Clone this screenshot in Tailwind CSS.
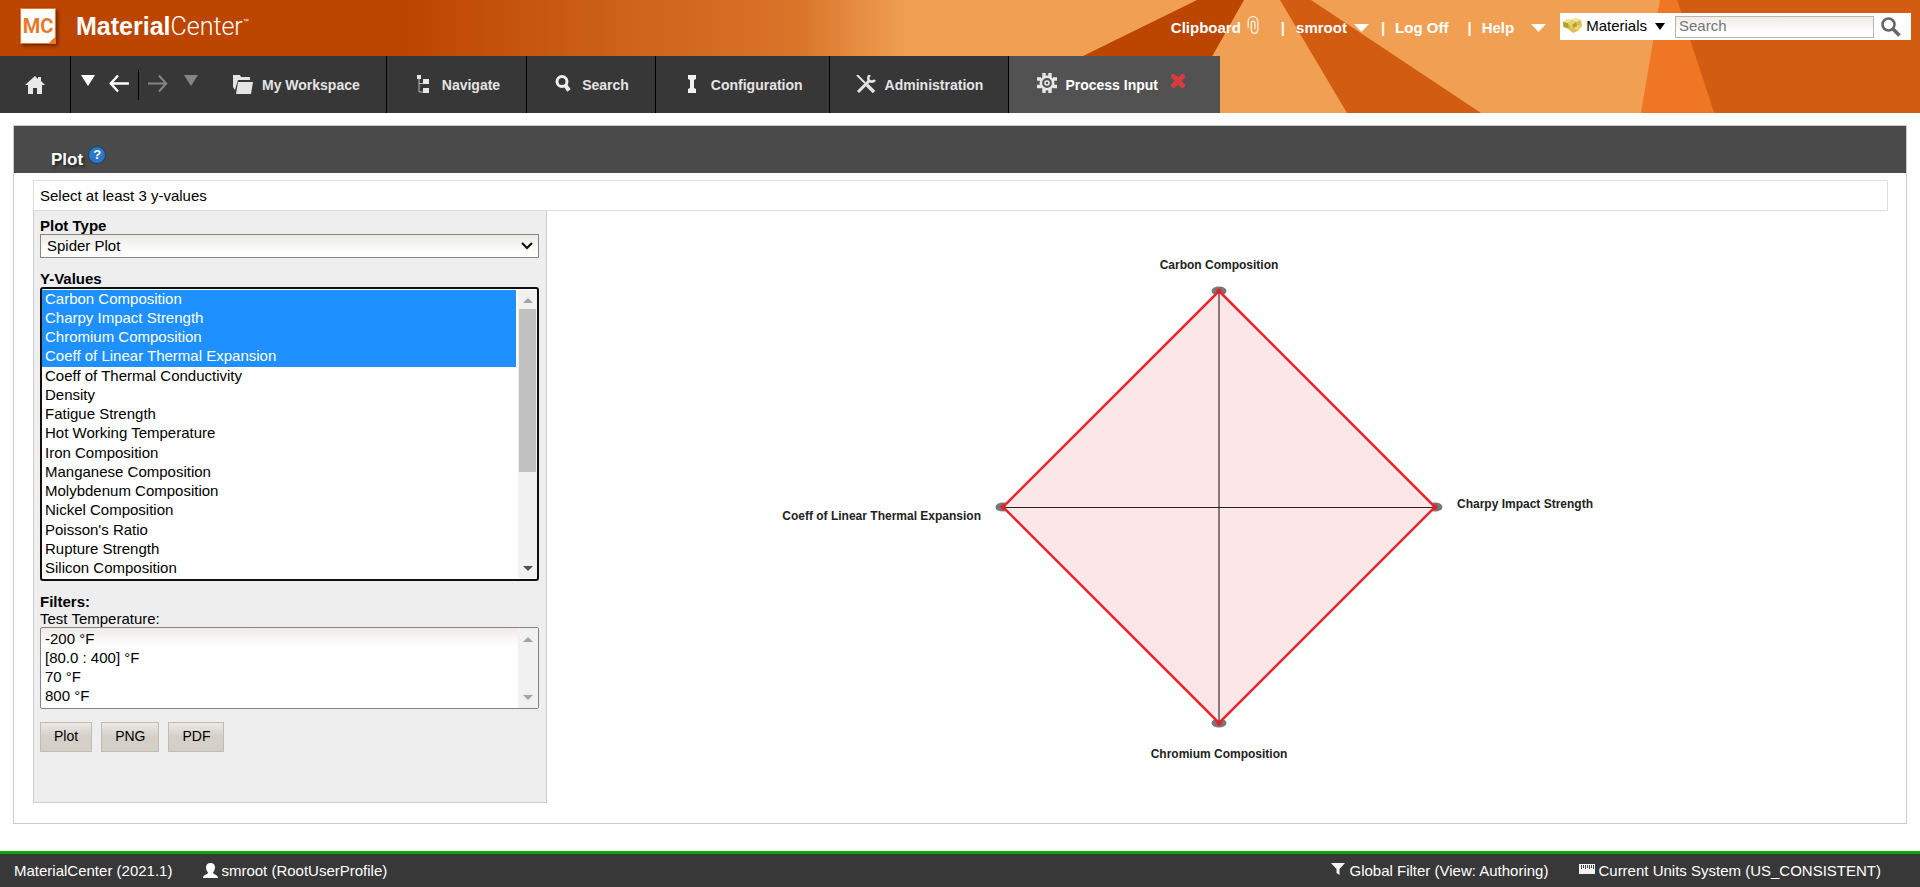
<!DOCTYPE html>
<html lang="en">
<head>
<meta charset="utf-8">
<title>MaterialCenter</title>
<script src="https://cdn.jsdelivr.net/npm/@tailwindcss/browser@4"></script>
</head>
<body class="flex min-h-screen flex-col bg-white font-['Liberation_Sans',Arial,sans-serif] text-[15px] text-black">

<header class="relative isolate bg-[#bc4500]">
  <svg class="absolute inset-0 -z-10 h-full w-full" viewBox="0 0 1920 113" preserveAspectRatio="none" aria-hidden="true">
    <defs>
      <linearGradient id="sweep" gradientUnits="userSpaceOnUse" x1="400" y1="0" x2="910" y2="0">
        <stop offset="0" stop-color="#bc4500"/>
        <stop offset=".47" stop-color="#cf641c"/>
        <stop offset=".78" stop-color="#d97429"/>
        <stop offset=".9" stop-color="#e68d41"/>
        <stop offset="1" stop-color="#f19f53"/>
      </linearGradient>
    </defs>
    <rect width="1920" height="113" fill="url(#sweep)"/>
    <path d="M1197 0H1244L1180 113H967Z" fill="#bc4500"/>
    <path d="M1280 0H1311L1481 113H1347Z" fill="#d25c12"/>
    <path d="M1660 0H1677L1714 113H1641Z" fill="#ef7622"/>
    <path d="M1677 0H1920V113H1714Z" fill="#d25c12"/>
  </svg>

  <div class="flex h-14 items-start justify-between pr-[9px] pl-5">
    <a href="#" class="flex items-center gap-5 pt-1.5 text-white">
      <span class="relative flex h-9 w-9 items-center justify-center border border-[#ef7622] bg-white font-['Roboto'] text-xl font-bold text-[#e8792c] shadow-[2px_2px_3px_rgba(60,20,0,0.6)]">MC
        <svg class="absolute right-0 bottom-0 h-1.5 w-1.5" viewBox="0 0 6 6" aria-hidden="true"><path d="M6 0v6H0z" fill="#ef7622"/></svg>
      </span>
      <span class="pt-0.5 text-[25px] leading-9 whitespace-nowrap"><b class="font-bold">Material</b><span class="font-['Roboto'] font-light">Center</span><sup class="align-super text-[6px]">™</sup></span>
    </a>

    <div class="flex items-start pt-[13px]">
      <nav class="flex h-[30px] items-center font-bold whitespace-nowrap text-white" aria-label="Account">
        <a href="#" class="flex items-center gap-1.5">Clipboard
          <svg class="mb-1.5 h-[18px] w-3" viewBox="0 0 12 18" fill="none" stroke="#fbe9d8" stroke-width="1.400" aria-hidden="true"><path d="M1.200 12V5a4.700 4.300 0 0 1 9.500 0v9a3.200 3.200 0 0 1-6.400 0V7a1.800 1.800 0 0 1 3.600 0v6"/></svg>
        </a>
        <span class="ml-[22px]">|</span>
        <a href="#" class="ml-[11px] flex items-center gap-[7px]">smroot
          <svg class="h-2 w-[15px]" viewBox="0 0 15 8" fill="#fff" aria-hidden="true"><path d="M0 0h15L7.500 8z"/></svg>
        </a>
        <span class="ml-3">|</span>
        <a href="#" class="ml-2.5">Log Off</a>
        <span class="ml-[19px]">|</span>
        <a href="#" class="ml-2.5 flex items-center gap-[17px]">Help
          <svg class="h-2 w-[15px]" viewBox="0 0 15 8" fill="#fff" aria-hidden="true"><path d="M0 0h15L7.500 8z"/></svg>
        </a>
      </nav>
      <form class="ml-[14px] flex h-[27px] items-center bg-white pr-2.5 pl-[3px]">
        <button type="button" class="flex items-center gap-1">
          <svg class="mb-0.5 h-[15px] w-[19px]" viewBox="0 0 19 15" aria-hidden="true">
            <path d="M0 4l4-3 4 1 5-2 5 2 1 6-4 5-5 2-5-4-5-2z" fill="#d9c14e"/>
            <path d="M0 4l4-3 4 1-3 3zM8 2l5-2 5 2-5 2z" fill="#f3e89a"/>
            <path d="M5 5l3-3 5 2 1 4-5 2zM10 10l5-3 4 1-4 5z" fill="#e6d36d"/>
            <path d="M0 4l5 1 1 5-5-1zM13 4l1 4-4 2-1-3z" fill="#b99a35"/>
          </svg>
          Materials
          <svg class="ml-1 h-[7px] w-[10px]" viewBox="0 0 10 7" aria-hidden="true"><path d="M0 0h10L5 7z"/></svg>
        </button>
        <input type="text" placeholder="Search" aria-label="Search" class="ml-2.5 h-[22px] w-[199px] border border-[#b8b4ac] bg-linear-to-b from-[#efece7] to-white to-80% px-[3px] placeholder:text-[#757575]">
        <button type="submit" class="ml-[7px]" aria-label="Run search">
          <svg class="h-5 w-5" viewBox="0 0 20 20" fill="none" stroke="#666" aria-hidden="true"><circle cx="7.500" cy="7.500" r="6" stroke-width="2.600"/><path d="M12 12l6.500 6.500" stroke-width="3.600"/></svg>
        </button>
      </form>
    </div>
  </div>

  <nav class="flex" aria-label="Main">
    <div class="flex h-[57px] items-center bg-[#373737] text-sm font-bold whitespace-nowrap text-[#e4e4e4]">
      <a href="#" aria-label="Home" class="flex h-full w-[71px] items-center justify-center border-r border-black">
        <svg class="h-[18px] w-5" viewBox="0 0 20 18" fill="#e8e8e8" aria-hidden="true"><path d="M10 0L0 9h3v9h5v-6h4v6h5V9h3l-4-4V1h-3v2z"/></svg>
      </a>
      <div class="flex h-full items-center border-r border-black pr-[26px] pl-2.5">
        <button type="button" aria-label="Back history"><svg class="h-5 w-[14px]" viewBox="0 0 14 20" fill="#fff" aria-hidden="true"><path d="M0 0h14L7 11z"/></svg></button>
        <button type="button" aria-label="Back" class="ml-[14px]"><svg class="h-5 w-5" viewBox="0 0 20 20" fill="none" stroke="#fff" stroke-width="2.400" aria-hidden="true"><path d="M9 .500L1.800 8.500 9 16.500M1.800 8.500H20"/></svg></button>
        <span class="mx-[9px] h-[30px] w-px bg-black"></span>
        <button type="button" aria-label="Forward"><svg class="h-5 w-5" viewBox="0 0 20 20" fill="none" stroke="#858585" stroke-width="2" aria-hidden="true"><path d="M11 .500l7.200 8L11 16.500M18.200 8.500H0"/></svg></button>
        <button type="button" aria-label="Forward history" class="ml-4"><svg class="h-5 w-[14px]" viewBox="0 0 14 20" fill="#858585" aria-hidden="true"><path d="M0 0h14L7 11z"/></svg></button>
        <a href="#" class="ml-[35px] flex items-center gap-[9px]">
          <svg class="h-5 w-5" viewBox="0 0 20 20" fill="#e4e4e4" aria-hidden="true"><path d="M0 0h7l1 2h9v3H5L2 15 0 12zM5 7h15l-2 12H3z"/></svg>
          My Workspace</a>
      </div>
      <a href="#" class="flex h-full items-center gap-[9px] border-r border-black pr-[26px] pl-[26px]">
        <svg class="h-5 w-5" viewBox="0 0 20 20" aria-hidden="true"><path d="M6 4v13h5M6 8.500h5" fill="none" stroke="#bbb"/><path d="M4 0h4v4H4zM10 4h6v5h-6zM10 13h6v5h-6z" fill="#e8e8e8"/></svg>
        Navigate</a>
      <a href="#" class="flex h-full items-center gap-[9px] border-r border-black pr-[26px] pl-[26px]">
        <svg class="h-5 w-5" viewBox="0 0 20 20" fill="none" stroke="#eee" aria-hidden="true"><circle cx="9" cy="6.500" r="5" stroke-width="3"/><path d="M12.500 10.500l3.500 5" stroke-width="4"/></svg>
        Search</a>
      <a href="#" class="flex h-full items-center gap-[9px] border-r border-black pr-[26px] pl-[26px]">
        <svg class="h-5 w-5" viewBox="0 0 20 20" fill="#f2f2f2" aria-hidden="true"><path d="M6 0h8v4l-2 1v8l2 1v4H6v-4l2-1V5L6 4z"/></svg>
        Configuration</a>
      <a href="#" class="flex h-full items-center gap-[9px] border-r border-black pr-[25px] pl-[26px]">
        <svg class="h-5 w-5" viewBox="0 0 20 20" fill="none" stroke="#e4e4e4" aria-hidden="true"><path d="M1 0l8 8" stroke-width="2"/><path d="M11 10l7 7" stroke-width="3.400"/><path d="M2 17L13 6" stroke-width="3"/><path d="M14 0a4 4 0 0 0-1 5.500 4 4 0 0 0 6-.500" stroke-width="2.600"/></svg>
        Administration</a>
    </div>
    <div class="flex h-[57px] items-center bg-[#525252] pr-[34px] pl-7 text-sm font-bold whitespace-nowrap text-white">
      <a href="#" class="flex items-center gap-2">
        <svg class="mb-1 h-5 w-5" viewBox="0 0 20 20" fill="none" stroke="#e8e8e8" aria-hidden="true"><circle cx="10" cy="10" r="6.200" stroke-width="2.600"/><circle cx="10" cy="10" r="2" stroke-width="1.600"/><g stroke-width="3.400"><path d="M7 0v4M13 0v4M7 16v4M13 16v4M0 6h4M0 13.500h4M16 6h4M16 13.500h4"/></g></svg>
        Process Input</a>
      <button type="button" aria-label="Close Process Input" class="mb-2 ml-3"><svg class="h-4 w-4" viewBox="0 0 16 16" aria-hidden="true"><path d="M3.500 3.500l9 9M12.500 3.500l-9 9" stroke="#d83a40" stroke-width="5" stroke-linecap="round"/></svg></button>
    </div>
  </nav>
</header>

<main class="flex-1 px-[13px] pt-3">
  <section class="border border-[#ccc] pb-5">
    <div class="flex h-[47px] items-end gap-[5px] bg-[#4a4a4b] pb-[3px] pl-[37px]">
      <h1 class="text-[17px] leading-5 font-bold text-white [text-shadow:2px_2px_3px_#222]">Plot</h1>
      <button type="button" aria-label="Help about plots" class="mb-1.5 flex h-[18px] w-[18px] items-center justify-center rounded-full border border-[#173f70] bg-[#2d79c4] text-[13px] font-bold text-white">?</button>
    </div>

    <div class="mt-[7px] mr-[18px] ml-[19px]">
      <p class="border border-[#ddd] px-1.5 py-1.5 leading-[17px]">Select at least 3 y-values</p>

      <div class="flex">
        <form class="w-[514px] shrink-0 border-x border-b border-[#ccc] bg-[#eee] pt-1.5 pr-[7px] pb-[50px] pl-1.5">
          <label for="plot-type" class="block leading-[17px] font-bold">Plot Type</label>
          <div class="relative">
            <select id="plot-type" class="block h-6 w-full appearance-none border border-[#858585] bg-linear-to-b from-[#edeae4] to-white to-80% px-1.5"><option>Spider Plot</option></select>
            <svg class="pointer-events-none absolute top-2 right-1.5 h-2 w-3" viewBox="0 0 12 8" fill="none" stroke="#111" stroke-width="2.200" aria-hidden="true"><path d="M1 1l5 5 5-5"/></svg>
          </div>

          <label for="y-values" class="mt-3 block leading-[17px] font-bold">Y-Values</label>
          <div class="relative">
            <select id="y-values" multiple size="15" class="block h-[294px] w-full overflow-hidden rounded-[3px] border-2 border-[#101010] bg-white py-px pr-[21px] pl-0 text-[15px] [&_option]:min-h-[19px] [&_option]:px-[3px] [&_option:nth-child(4n)]:min-h-5 [&_option:checked]:bg-[#1e90ff] [&_option:checked]:bg-linear-to-b [&_option:checked]:from-[#1e90ff] [&_option:checked]:to-[#1e90ff] [&_option:checked]:text-white">
              <option selected>Carbon Composition</option>
              <option selected>Charpy Impact Strength</option>
              <option selected>Chromium Composition</option>
              <option selected>Coeff of Linear Thermal Expansion</option>
              <option>Coeff of Thermal Conductivity</option>
              <option>Density</option>
              <option>Fatigue Strength</option>
              <option>Hot Working Temperature</option>
              <option>Iron Composition</option>
              <option>Manganese Composition</option>
              <option>Molybdenum Composition</option>
              <option>Nickel Composition</option>
              <option>Poisson's Ratio</option>
              <option>Rupture Strength</option>
              <option>Silicon Composition</option>
            </select>
            <div class="absolute inset-y-[3px] right-[2px] flex w-[19px] flex-col items-center bg-[#f1f1f1] pt-2 pb-[7px]" aria-hidden="true">
              <svg class="h-[5px] w-[10px] shrink-0" viewBox="0 0 10 5" fill="#a3a3a3"><path d="M0 5h10L5 0z"/></svg>
              <span class="mt-1.5 h-[163px] w-[17px] bg-[#c1c1c1]"></span>
              <svg class="mt-auto h-[5px] w-[10px] shrink-0" viewBox="0 0 10 5" fill="#505050"><path d="M0 0h10L5 5z"/></svg>
            </div>
          </div>

          <h2 class="mt-3 leading-[17px] font-bold">Filters:</h2>
          <label for="test-temperature" class="block leading-[17px]">Test Temperature:</label>
          <div class="relative">
            <select id="test-temperature" multiple size="4" class="block h-[82px] w-full overflow-hidden rounded-xs border border-[#858585] bg-white bg-linear-to-b from-[#efece7] to-white to-[18px] py-0.5 pr-5 pl-px text-[15px] [&_option]:min-h-[19px] [&_option]:px-[3px]">
              <option>-200 °F</option>
              <option>[80.0 : 400] °F</option>
              <option>70 °F</option>
              <option>800 °F</option>
            </select>
            <div class="absolute inset-y-px right-px flex w-5 flex-col items-center justify-between bg-[#f1f1f1] pt-[9px] pb-2" aria-hidden="true">
              <svg class="h-[5px] w-[10px]" viewBox="0 0 10 5" fill="#a3a3a3"><path d="M0 5h10L5 0z"/></svg>
              <svg class="h-[5px] w-[10px]" viewBox="0 0 10 5" fill="#a3a3a3"><path d="M0 0h10L5 5z"/></svg>
            </div>
          </div>

          <div class="mt-[13px] flex gap-[9px] text-sm">
            <button type="button" class="h-[30px] border border-[#c0bbb3] bg-linear-to-b from-[#ece9e4] to-[#d4cfc7] to-50% px-[13px] pb-0.5">Plot</button>
            <button type="button" class="h-[30px] border border-[#c0bbb3] bg-linear-to-b from-[#ece9e4] to-[#d4cfc7] to-50% px-[13px] pb-0.5">PNG</button>
            <button type="button" class="h-[30px] border border-[#c0bbb3] bg-linear-to-b from-[#ece9e4] to-[#d4cfc7] to-50% px-[13px] pb-0.5">PDF</button>
          </div>
        </form>

        <svg class="min-w-0 flex-1" viewBox="0 0 1341 592" role="img" aria-label="Spider plot of the selected values">
          <g fill="#777">
            <ellipse cx="672" cy="80" rx="7.500" ry="4.500"/><ellipse cx="888" cy="296" rx="7.500" ry="4.500"/>
            <ellipse cx="672" cy="512" rx="7.500" ry="4.500"/><ellipse cx="456" cy="296" rx="7.500" ry="4.500"/>
          </g>
          <path d="M672 80L888 296 672 512 456 296z" fill="#fbe7e8"/>
          <path d="M672 80V512" stroke="#8a7779" stroke-width="2"/>
          <path d="M456 296H888" stroke="#2b2123" shape-rendering="crispEdges"/>
          <path d="M672 80L888 296 672 512 456 296z" fill="none" stroke="#e9252c" stroke-width="2.500"/>
          <g fill="#e0202a"><circle cx="672" cy="80" r="2.500"/><circle cx="888" cy="296" r="2.500"/><circle cx="672" cy="512" r="2.500"/><circle cx="456" cy="296" r="2.500"/></g>
          <g class="text-xs font-bold" fill="#222">
            <text x="672" y="58" text-anchor="middle">Carbon Composition</text>
            <text x="910" y="297">Charpy Impact Strength</text>
            <text x="672" y="547" text-anchor="middle">Chromium Composition</text>
            <text x="434" y="309" text-anchor="end">Coeff of Linear Thermal Expansion</text>
          </g>
        </svg>
      </div>
    </div>
  </section>
</main>

<footer class="flex h-9 items-center justify-between border-t-[3px] border-[#0aa80a] bg-[#383838] pt-px pr-[39px] pl-3.5 whitespace-nowrap text-white">
  <div class="flex items-center gap-[31px]">
    <span>MaterialCenter (2021.1)</span>
    <a href="#" class="flex items-center gap-[3px]">
      <svg class="mb-0.5 h-[15px] w-[15px]" viewBox="0 0 15 15" fill="#fff" aria-hidden="true"><path d="M7.500 0C4.500 0 3 2 3 4.500S4.500 9 5 9.500c0 2-5 2-5 5.500h15c0-3.500-5-3.500-5-5.500.500-.500 2-2.500 2-5S10.500 0 7.500 0z"/></svg>
      smroot (RootUserProfile)</a>
  </div>
  <div class="flex items-center gap-[31px]">
    <a href="#" class="flex items-center gap-1">
      <svg class="mb-1 h-3 w-[14px]" viewBox="0 0 14 12" fill="#f2f2f2" aria-hidden="true"><path d="M0 0h14L8.500 6v6l-3-2V6z"/></svg>
      Global Filter (View: Authoring)</a>
    <a href="#" class="flex items-center gap-[3px]">
      <svg class="mb-1 h-[10px] w-4" viewBox="0 0 16 10" aria-hidden="true"><path d="M0 0h16v10H0z" fill="#f2f2f2"/><path d="M2.500 1v4M4.500 1v3M6.500 1v4M8.500 1v3M10.500 1v4M12.500 1v3M14.500 1v4" stroke="#444"/></svg>
      Current Units System (US_CONSISTENT)</a>
  </div>
</footer>
</body>
</html>
